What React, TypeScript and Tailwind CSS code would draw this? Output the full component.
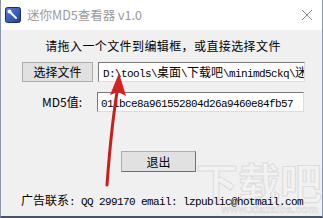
import * as React from 'react';

// Mini MD5 viewer window (classic Win32 dialog look)

const cjk = { fontFamily: '"Noto Sans CJK SC", "Noto Sans", sans-serif' };
const mono = { fontFamily: '"Liberation Mono", monospace' };

// SimSun-like: ascii half width (6px), CJK full width (12px)
function Mixed({ text }: { text: string }) {
  const runs = text.match(/[\x00-\x7f]+|[^\x00-\x7f]+/g) || [];
  return (
    <>
      {runs.map((r, i) =>
        /^[\x00-\x7f]/.test(r) ? (
          <span key={i} style={mono} className="text-[11px] tracking-[-0.6px] whitespace-pre">
            {r}
          </span>
        ) : (
          <span key={i} style={cjk} className="text-[12px]">
            {r}
          </span>
        )
      )}
    </>
  );
}

function AppIcon() {
  return (
    <svg width="16" height="16" viewBox="0 0 16 16">
      <defs>
        <linearGradient id="ig" x1="0" y1="0" x2="1" y2="1">
          <stop offset="0" stopColor="#5a7fd8" />
          <stop offset="1" stopColor="#1d3f9a" />
        </linearGradient>
      </defs>
      <rect x="0.5" y="0.5" width="15" height="15" rx="2" fill="url(#ig)" stroke="#1a2f70" />
      <path d="M4 4 L11 11" stroke="#fff" strokeWidth="2" strokeLinecap="round" />
      <circle cx="4.5" cy="4.5" r="2" fill="#fff" />
    </svg>
  );
}

function Arrow() {
  return (
    <svg
      className="absolute left-0 top-0 pointer-events-none"
      width="323"
      height="218"
      viewBox="0 0 323 218"
    >
      <path d="M106 185 Q110 130 116 92" stroke="#c81e1e" strokeWidth="3" fill="none" strokeLinecap="round" />
      <path d="M118 73 L125 96 L117 92 L109 95 Z" fill="#d32222" />
    </svg>
  );
}

export default function App() {
  return (
    <div className="relative w-[323px] h-[218px] overflow-hidden bg-[#f0f0f0] border-x border-b-2 border-x-[#8896a6] border-b-[#46546a]">
      {/* watermark */}
      <div
        className="absolute right-[0px] top-[160px] text-[42px] font-bold leading-none text-[#f2f2f2] [-webkit-text-stroke:1px_#dcdcdc]"
        style={cjk}
      >
        下载吧
      </div>
      <div
        className="absolute right-[4px] top-[204px] text-[11px] font-bold leading-none text-[#f2f2f2] [-webkit-text-stroke:0.5px_#d6d6d6]"
        style={{ fontFamily: '"Liberation Sans", sans-serif' }}
      >
        www.xiazaiba.com
      </div>

      {/* title bar */}
      <div className="relative h-[30px] bg-white flex items-center pl-[4px] pr-[9px]">
        <AppIcon />
        <span className="ml-[6px] text-[12.5px] text-[#9a9a9a] leading-none" style={cjk}>
          迷你MD5查看器 v1.0
        </span>
        <svg className="ml-auto" width="12" height="12" viewBox="0 0 12 12">
          <path d="M1 1 L11 11 M11 1 L1 11" stroke="#8a8a8a" strokeWidth="1" />
        </svg>
      </div>

      {/* body */}
      <div className="relative flex flex-col text-[12px] text-black" style={cjk}>
        <div className="mt-[9px] h-[14px] leading-[14px] text-center pl-[3px] tracking-[0.4px]">
          请拖入一个文件到编辑框，或直接选择文件
        </div>

        <div className="mt-[9px] flex items-start pl-[21px]">
          <button className="w-[71px] h-[20px] bg-[#e1e1e1] border border-[#adadad] leading-[18px] text-[12px]">
            选择文件
          </button>
          <div className="ml-[5px] w-[207px] h-[20px] bg-white border border-t-[#7a7a7a] border-l-[#7a7a7a] border-b-[#dcdcdc] border-r-[#dcdcdc] pl-[4px] leading-[18px] whitespace-nowrap overflow-hidden">
            <Mixed text="D:\tools\桌面\下载吧\minimd5ckq\迷" />
          </div>
        </div>

        <div className="mt-[10px] flex items-center pl-[41px]">
          <span className="w-[55px] text-[12px]">MD5值:</span>
          <div className="w-[207px] h-[20px] bg-white border border-t-[#7a7a7a] border-l-[#7a7a7a] border-b-[#dcdcdc] border-r-[#dcdcdc] pl-[3px] leading-[18px] whitespace-nowrap overflow-hidden">
            <Mixed text="011bce8a961552804d26a9460e84fb57" />
          </div>
        </div>

        <div className="mt-[39px] pl-[120px]">
          <button className="w-[75px] h-[21px] bg-[#e1e1e1] border border-[#adadad] border-b-[#707070] border-r-[#707070] leading-[19px] text-[12px]">
            退出
          </button>
        </div>

        <div className="mt-[21px] pl-[20px] h-[14px] leading-[14px] whitespace-nowrap">
          <Mixed text="广告联系: QQ 299170 email: lzpublic@hotmail.com" />
        </div>
      </div>

      <Arrow />
    </div>
  );
}
